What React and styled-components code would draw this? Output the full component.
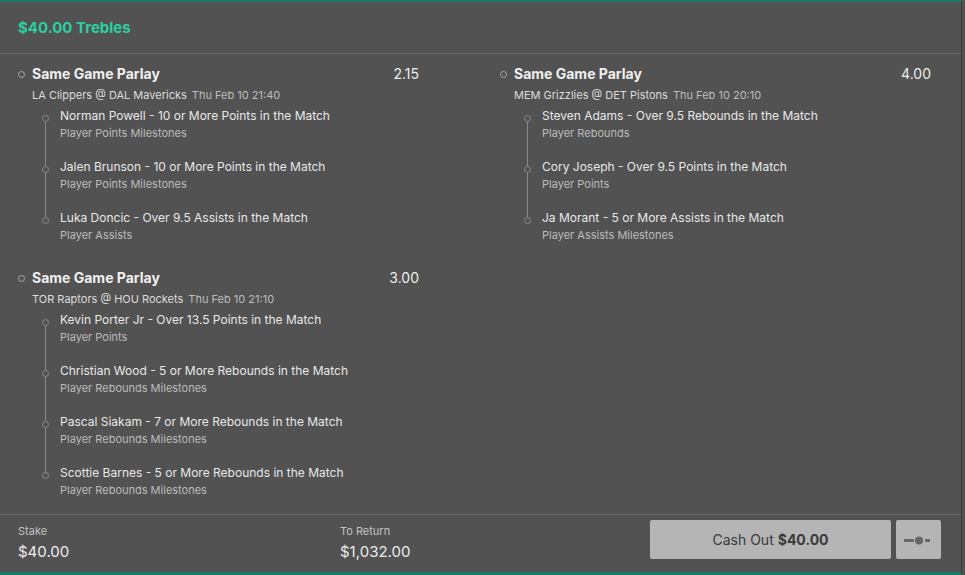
import React from "react";
import styled, { createGlobalStyle } from "styled-components";

const GlobalStyle = createGlobalStyle`
  html, body { margin: 0; padding: 0; background: #525252; }
  body { font-family: Inter, "Noto Sans", sans-serif; -webkit-font-smoothing: antialiased; }
`;

const Frame = styled.div`
  width: 962px;
  height: 575px;
  box-sizing: border-box;
  background: #525252;
  border-top: 2px solid #1b7a63;
  border-bottom: 3px solid #1b7a63;
  border-right: 1px solid #3a3a3a;
  display: flex;
  flex-direction: column;
  color: #ececec;
`;

const Header = styled.div`
  height: 51px;
  flex: none;
  display: flex;
  align-items: center;
  padding-left: 18px;
  border-bottom: 1px solid #686868;
  font-size: 15px;
  font-weight: 700;
  color: #2ad0a0;
`;

const Body = styled.div`
  flex: 1;
  display: grid;
  grid-template-columns: 401px 1fr;
  column-gap: 81px;
  align-content: start;
  padding: 10px 30px 0 18px;
`;

const Column = styled.div`
  display: flex;
  flex-direction: column;
  gap: 26px;
`;

const Card = styled.div`
  display: grid;
  grid-template-columns: 14px 1fr auto;
`;

const Dot = styled.span`
  width: 5px;
  height: 5px;
  border: 1px solid #a8a8a8;
  border-radius: 50%;
  margin-top: 7px;
  box-sizing: content-box;
`;

const CardMain = styled.div`
  display: flex;
  flex-direction: column;
`;

const CardTitle = styled.div`
  font-size: 14px;
  font-weight: 700;
  line-height: 20px;
  color: #f0f0f0;
`;

const Odds = styled.div`
  font-size: 14px;
  line-height: 20px;
  color: #ececec;
`;

const Event = styled.div`
  margin-top: 4px;
  font-size: 11px;
  line-height: 14px;
  color: #dcdcdc;
  display: flex;
  gap: 5px;
`;

const EventDate = styled.span`
  color: #bdbdbd;
`;

const Legs = styled.div`
  margin-top: 6px;
  display: flex;
  flex-direction: column;
`;

const Leg = styled.div`
  display: grid;
  grid-template-columns: 28px 1fr;
  padding-bottom: ${(p) => (p.$last ? "0" : "19px")};
`;

const Rail = styled.div`
  position: relative;
  &::before {
    content: "";
    position: absolute;
    left: 13px;
    top: ${(p) => (p.$first ? "10px" : "0")};
    height: ${(p) => (p.$last ? "10px" : "auto")};
    bottom: ${(p) => (p.$last ? "auto" : "-19px")};
    width: 1px;
    background: #8a8a8a;
  }
  &::after {
    content: "";
    position: absolute;
    left: 10px;
    top: 7px;
    width: 5px;
    height: 5px;
    border: 1px solid #8a8a8a;
    border-radius: 50%;
    background: #525252;
  }
`;

const LegText = styled.div`
  display: flex;
  flex-direction: column;
  gap: 2px;
`;

const LegTitle = styled.div`
  font-size: 12px;
  line-height: 16px;
  color: #e8e8e8;
`;

const Market = styled.div`
  font-size: 11px;
  line-height: 14px;
  color: #bcbcbc;
`;

const Footer = styled.div`
  flex: none;
  height: 58px;
  box-sizing: border-box;
  border-top: 1px solid #686868;
  display: flex;
  align-items: flex-start;
  padding: 5px 20px 0 18px;
`;

const Figure = styled.div`
  width: ${(p) => p.$w}px;
  display: flex;
  flex-direction: column;
  padding-top: 4px;
`;

const FigLabel = styled.div`
  font-size: 11px;
  line-height: 14px;
  color: #c4c4c4;
`;

const FigValue = styled.div`
  margin-top: 4px;
  font-size: 15px;
  line-height: 20px;
  color: #ececec;
`;

const Spacer = styled.div`
  flex: 1;
`;

const Button = styled.button`
  height: 39px;
  width: ${(p) => p.$w}px;
  margin-left: ${(p) => p.$ml || 0}px;
  border: none;
  border-radius: 2px;
  background: #b5b5b5;
  color: #3a3a3a;
  font-family: inherit;
  font-size: 14px;
  display: flex;
  align-items: center;
  justify-content: center;
  gap: 4px;
  padding: 0;
  b { font-weight: 700; }
`;

const parlays = {
  left: [
    {
      odds: "2.15",
      event: "LA Clippers @ DAL Mavericks",
      date: "Thu Feb 10 21:40",
      legs: [
        ["Norman Powell - 10 or More Points in the Match", "Player Points Milestones"],
        ["Jalen Brunson - 10 or More Points in the Match", "Player Points Milestones"],
        ["Luka Doncic - Over 9.5 Assists in the Match", "Player Assists"],
      ],
    },
    {
      odds: "3.00",
      event: "TOR Raptors @ HOU Rockets",
      date: "Thu Feb 10 21:10",
      legs: [
        ["Kevin Porter Jr - Over 13.5 Points in the Match", "Player Points"],
        ["Christian Wood - 5 or More Rebounds in the Match", "Player Rebounds Milestones"],
        ["Pascal Siakam - 7 or More Rebounds in the Match", "Player Rebounds Milestones"],
        ["Scottie Barnes - 5 or More Rebounds in the Match", "Player Rebounds Milestones"],
      ],
    },
  ],
  right: [
    {
      odds: "4.00",
      event: "MEM Grizzlies @ DET Pistons",
      date: "Thu Feb 10 20:10",
      legs: [
        ["Steven Adams - Over 9.5 Rebounds in the Match", "Player Rebounds"],
        ["Cory Joseph - Over 9.5 Points in the Match", "Player Points"],
        ["Ja Morant - 5 or More Assists in the Match", "Player Assists Milestones"],
      ],
    },
  ],
};

function Parlay({ p }) {
  return (
    <Card>
      <Dot />
      <CardMain>
        <CardTitle>Same Game Parlay</CardTitle>
        <Event>
          <span>{p.event}</span>
          <EventDate>{p.date}</EventDate>
        </Event>
        <Legs>
          {p.legs.map(([t, m], i) => (
            <Leg key={i} $last={i === p.legs.length - 1}>
              <Rail $first={i === 0} $last={i === p.legs.length - 1} />
              <LegText>
                <LegTitle>{t}</LegTitle>
                <Market>{m}</Market>
              </LegText>
            </Leg>
          ))}
        </Legs>
      </CardMain>
      <Odds>{p.odds}</Odds>
    </Card>
  );
}

function SliderIcon() {
  return (
    <svg width="34" height="12" viewBox="0 0 34 12">
      <rect x="2" y="5" width="10" height="3" rx="0.5" fill="#666" />
      <circle cx="17" cy="6.5" r="4" fill="#666" />
      <rect x="23" y="5" width="5" height="3" rx="0.5" fill="#666" />
    </svg>
  );
}

export default function App() {
  return (
    <>
      <GlobalStyle />
      <Frame>
        <Header>$40.00 Trebles</Header>
        <Body>
          <Column>
            {parlays.left.map((p, i) => (
              <Parlay key={i} p={p} />
            ))}
          </Column>
          <Column>
            {parlays.right.map((p, i) => (
              <Parlay key={i} p={p} />
            ))}
          </Column>
        </Body>
        <Footer>
          <Figure $w={322}>
            <FigLabel>Stake</FigLabel>
            <FigValue>$40.00</FigValue>
          </Figure>
          <Figure $w={200}>
            <FigLabel>To Return</FigLabel>
            <FigValue>$1,032.00</FigValue>
          </Figure>
          <Spacer />
          <Button $w={241}>
            Cash Out <b>$40.00</b>
          </Button>
          <Button $w={45} $ml={5}>
            <SliderIcon />
          </Button>
        </Footer>
      </Frame>
    </>
  );
}
